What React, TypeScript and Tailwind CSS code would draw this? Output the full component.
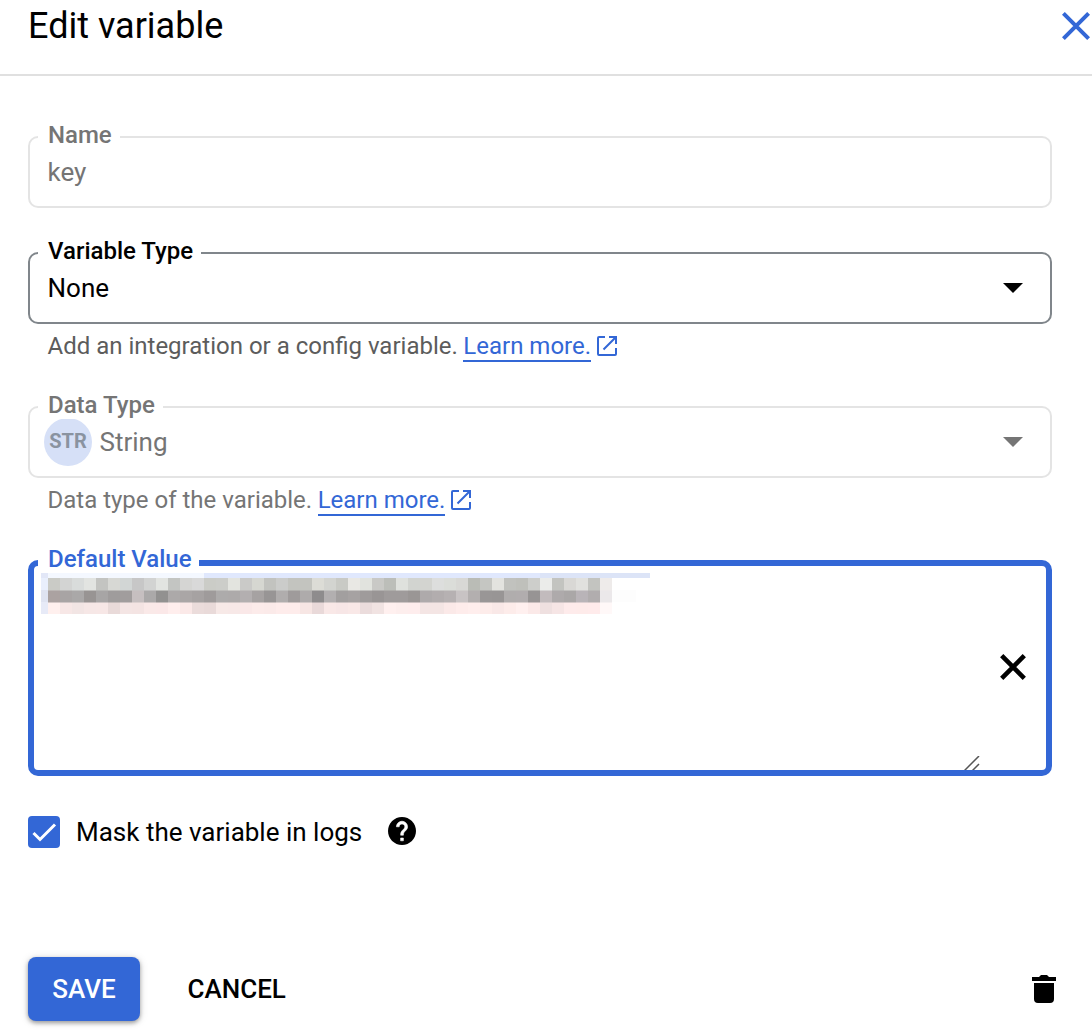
import type { ReactNode } from "react";

const strip = (s: string) => s.split(" ").map((c) => "#" + c);

const upper = strip(
  "cacbc6 d3d4d3 d9dcdb e2e4e1 c3c4c1 d7d8d4 d2d6d5 c7c7c7 d2d3d2 e2e4e1 c3c5c2 d5d5d3 d9d9d9 cbccc7 cccdc9 e3e4df cacac8 d6d7d1 c2c3bf cbccca c3c4bf c3c4bf dcdcd6 d3d4d0 c9cac5 e9e8e4 e1e3de c9c9c6 bcbeb9 dfe1dd d2d4d0 d3d4d0 dddedd dbddd9 d8d8d5 babcb6 c5c6c2 e3e3df c1c2be bfc0bb cdcecb ebecea c3c4c0 d9d8d5 e1e1de c3c4c0 eeebea",
);
const middle = strip(
  "aba2a1 a8a4a4 aaa8a8 989493 a7a5a5 9f9c9c a19d9d c6bfc0 aba9a9 929190 aca9a9 aaa6a6 a6a2a2 9f9b9b adabab adaaaa b3afb0 a6a2a2 989595 b0adad 9f9b9b aeabab 8e8c8d b2afb0 a29f9f a6a2a2 9f9b9b 999595 9f9b9b 9f9b9b 9a9695 aeaaab b2adae b6b1b2 c8c3c4 b3afaf 999696 989595 b0adad b1adae 979494 c2bbbd aeaaab aaa7a7 b9b4b8 b1adae ebe8ea",
);
const lower = strip(
  "fff0ee f7e7e6 f2e5e4 f6e7e6 f7e7e6 e9dad9 f4e5e4 f4e4e3 fae9e8 fbe8e8 ffeeed fbe9e8 ebdcdb e9dad9 f7e9e7 f7e8e7 fae8e8 fcebea fbeae9 feeceb feeceb f7e6e4 e9d9d9 f9e8e7 f7e6e6 f9e8e7 ebdcdc f1e3e2 fff0ef fdeeed feeded f4e5e4 f4e5e4 fbe9e8 feeceb ffeeed fdecea f9e8e7 fdecea fff0ef fbe9e8 efe0e0 f6e5e5 feebeb feebea ffebeb fff8f8",
);

/** Pixelated redaction drawn over the secret value. */
function Redaction() {
  return (
    <svg width="609" height="41" viewBox="0 0 609 41" className="block">
      <rect x="0" y="0" width="7" height="5" fill="#e2e7f7" />
      <rect x="7" y="0" width="156" height="5" fill="#f4f8ff" />
      <rect x="163" y="0" width="336" height="5" fill="#e0e8fd" />
      <rect x="499" y="0" width="110" height="5" fill="#dce4f7" />
      <rect x="0" y="5" width="7" height="12" fill="#e9effc" />
      <rect x="0" y="17" width="7" height="12" fill="#dfe3f1" />
      <rect x="0" y="29" width="7" height="12" fill="#e7eaf7" />
      <rect x="571" y="17" width="24" height="12" fill="#fdfdfd" />
      {lower.map((c, i) => (
        <rect key={i} x={7 + i * 12} y="29" width="12" height="12" fill={c} />
      ))}
      {upper.map((c, i) => (
        <rect key={i} x={7 + i * 12} y="5" width="12" height="13" fill={c} />
      ))}
      {middle.map((c, i) => (
        <rect key={i} x={7 + i * 12} y="17.5" width="12" height="12" fill={c} />
      ))}
    </svg>
  );
}

function FieldLabel({ className, children }: { className: string; children: ReactNode }) {
  return (
    <span
      className={`absolute whitespace-nowrap bg-white pl-[10px] text-[24px] leading-[28px] font-medium ${className}`}
    >
      {children}
    </span>
  );
}

function Caret({ className }: { className: string }) {
  return (
    <svg width="20" height="10" viewBox="0 0 20 10" className={className} fill="currentColor">
      <path d="M0 0h20L10 10z" />
    </svg>
  );
}

function LearnMore() {
  return (
    <a className="ml-[5.5px] flex items-start text-[#3367d6]">
      <span className="h-[30px] border-b-2 border-[#3367d6] leading-[28px]">Learn more.</span>
      <svg width="20" height="20" viewBox="0 0 20 20" className="mt-[4px] ml-[6px]" fill="none" stroke="currentColor" strokeWidth="2">
        <path d="M8 1H2Q1 1 1 2V18Q1 19 2 19H18Q19 19 19 18V12M12 1H19V8M19 1L6.5 13.5" />
      </svg>
    </a>
  );
}

export default function App() {
  return (
    <div className="flex h-[1036px] w-[1092px] flex-col overflow-hidden bg-white font-['Roboto',sans-serif] text-black">
      <header className="flex h-[76px] shrink-0 items-start justify-between border-b-2 border-[#e0e0e0] pl-[28px]">
        <h1 className="mt-[5px] text-[36px] leading-[42px] font-normal">Edit variable</h1>
        <svg width="28" height="28" viewBox="0 0 28 28" className="mt-[12px] mr-[2px]" stroke="#3367d6" strokeWidth="4">
          <path d="M1.4 1.4L26.6 26.6M26.6 1.4L1.4 26.6" />
        </svg>
      </header>

      <main className="flex w-[1052px] flex-col pt-[60px] pl-[28px]">
        <div className="relative flex h-[72px] items-center rounded-[10px] border-2 border-[#e4e4e4] pl-[17.5px] text-[#757575]">
          <FieldLabel className="top-[-17px] left-[8px] pr-[8px]">Name</FieldLabel>
          <span className="text-[26px] leading-[32px]">key</span>
        </div>

        <div className="relative mt-[44px] flex h-[72px] items-center justify-between rounded-[10px] border-2 border-[#80868b] pr-[27px] pl-[17.5px]">
          <FieldLabel className="top-[-17px] left-[8px] pr-[8px]">Variable Type</FieldLabel>
          <span className="text-[26px] leading-[32px]">None</span>
          <Caret className="text-black" />
        </div>
        <div className="mt-[8px] flex h-[30px] pl-[19.5px] text-[24px] leading-[28px] text-[#5c5c5c]">
          <span>Add an integration or a config variable.</span>
          <LearnMore />
        </div>

        <div className="relative mt-[44px] flex h-[72px] items-center rounded-[10px] border-2 border-[#e4e4e4] pr-[27px] pl-[14px] text-[#757575]">
          <FieldLabel className="top-[-17px] left-[8px] pr-[8px]">Data Type</FieldLabel>
          <span className="flex size-[48px] items-center justify-center rounded-full bg-[#d6e0f7] pb-[3px] text-[20px] font-bold text-[#8a93a0]">
            STR
          </span>
          <span className="ml-[7.5px] text-[26px] leading-[32px]">String</span>
          <Caret className="ml-auto text-[#757575]" />
        </div>
        <div className="mt-[8px] flex h-[30px] pl-[19.5px] text-[24px] leading-[28px] text-[#757575]">
          <span>Data type of the variable.</span>
          <LearnMore />
        </div>

        <div className="relative mt-[44px] flex h-[216px] items-center rounded-[10px] border-6 border-[#3367d6]">
          <FieldLabel className="top-[-21px] left-[4px] pr-[7px] text-[#3367d6]">Default Value</FieldLabel>
          <div className="flex h-full w-[946px] flex-col justify-between pt-[7px] pl-[7px]">
            <Redaction />
            <svg width="16" height="14" viewBox="0 0 16 14" className="self-end" stroke="#555" strokeWidth="1.5">
              <path d="M.5 14.5L15 0M8.5 14.5L15 8" />
            </svg>
          </div>
          <svg width="26" height="26" viewBox="0 0 26 26" className="mb-[2px] ml-[20px]" stroke="#000" strokeWidth="4.6">
            <path d="M1.7 1.7L24.3 24.3M24.3 1.7L1.7 24.3" />
          </svg>
        </div>

        <div className="mt-[40px] flex h-[32px] items-center">
          <span className="flex size-[32px] items-center justify-center rounded-[4px] bg-[#3367d6]">
            <svg width="32" height="32" viewBox="0 0 32 32" fill="none" stroke="#fff" strokeWidth="3">
              <path d="M5.5 17L12 23.5L27 8.5" />
            </svg>
          </span>
          <span className="ml-[16px] text-[26px] leading-[32px]">Mask the variable in logs</span>
          <svg width="28" height="28" viewBox="2 2 20 20" className="mb-[2px] ml-[26px]">
            <path
              stroke="#000"
              strokeWidth="0"
              d="M12 2C6.48 2 2 6.48 2 12s4.48 10 10 10 10-4.48 10-10S17.52 2 12 2z"
            />
            <path
              fill="#fff"
              stroke="#fff"
              strokeWidth="0.4"
              d="M13 19h-2v-2h2v2zm2.07-7.75l-.9.92C13.45 12.9 13 13.5 13 15h-2v-.5c0-1.1.45-2.1 1.17-2.83l1.24-1.26c.37-.36.59-.86.59-1.41 0-1.1-.9-2-2-2s-2 .9-2 2H8c0-2.21 1.79-4 4-4s4 1.79 4 4c0 .88-.36 1.68-.93 2.25z"
            />
          </svg>
        </div>
      </main>

      <footer className="mt-[109px] flex h-[64px] shrink-0 items-center pr-[36px] pl-[28px] text-[26px] font-medium">
        <button className="h-[64px] w-[112px] rounded-[8px] bg-[#3367d6] text-white shadow-[0_2px_4px_rgba(0,0,0,0.35),0_1px_10px_rgba(0,0,0,0.12)]">
          SAVE
        </button>
        <button className="ml-[47.5px]">CANCEL</button>
        <svg width="24" height="28" viewBox="0 0 24 28" className="ml-auto">
          <path d="M0 2H7L9 0H15L17 2H24V6H0zM2 8H22V24Q22 28 18 28H6Q2 28 2 24z" />
        </svg>
      </footer>
    </div>
  );
}
